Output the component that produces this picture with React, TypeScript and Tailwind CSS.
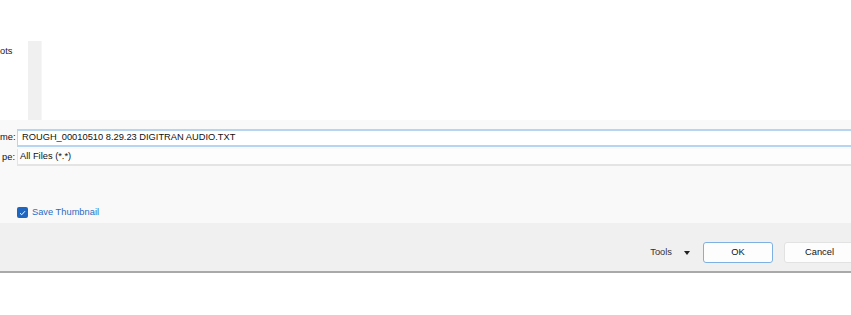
import React from 'react'

function App() {
  return (
    <div className="flex h-[315px] w-[851px] flex-col overflow-hidden bg-white font-['Liberation_Sans',Arial,sans-serif] text-[9.3px] text-[#111]">
      {/* FOLDER LIST */}
      <div className="flex h-[120px] bg-white">
        <div className="w-[28px] pt-[44px] leading-[14px] text-[#222]">ots</div>
        <div className="mt-[41px] h-[79px] w-[14px] border-r border-[#f6f6f6] bg-[#f0f0f0]" />
      </div>

      {/* FIELDS */}
      <div className="flex h-[103px] flex-col bg-[#f9f9f9] pt-[9px]">
        <div className="flex items-center">
          <span className="w-[17px] whitespace-nowrap pr-[2px] text-right">me:</span>
          <div className="flex h-[18px] flex-1 items-center border-y-2 border-l border-[#b8d5f0] bg-white pl-[4px]">
            ROUGH_00010510 8.29.23 DIGITRAN AUDIO.TXT
          </div>
        </div>
        <div className="mt-[2px] flex items-center">
          <span className="w-[17px] whitespace-nowrap pr-[2px] text-right">pe:</span>
          <div className="flex h-[17px] flex-1 items-center border-b-2 border-l border-[#e4e4e4] bg-[#fdfdfd] pl-[2px]">
            All Files (*.*)
          </div>
        </div>
        <label className="mt-[40px] flex items-center gap-[4px] pl-[17px]">
          <span className="flex h-[11px] w-[11px] items-center justify-center rounded-[2px] bg-[#1f66c1]">
            <svg width="7" height="6" viewBox="0 0 7 6" fill="none">
              <path d="M1 3.2 L2.7 4.8 L6 1.2" stroke="white" strokeWidth="1" />
            </svg>
          </span>
          <span className="text-[#2b6bc4]">Save Thumbnail</span>
        </label>
      </div>

      {/* BUTTON BAR */}
      <div className="flex h-[50px] items-start justify-end gap-[12px] border-b-2 border-[#a9a9a9] bg-[#f0f0f0] pt-[19px]">
        <div className="mr-[1px] flex h-[21px] items-center gap-[12px] text-[#333]">
          <span>Tools</span>
          <svg width="6" height="4" viewBox="0 0 6 4">
            <path d="M0 0 H6 L3 4 Z" fill="#222" />
          </svg>
        </div>
        <button className="h-[21px] w-[70px] rounded-[3px] border border-[#7fb0e2] bg-[#fdfdfd] text-[#111]">
          OK
        </button>
        <button className="-mr-[4px] ml-[-1px] h-[21px] w-[71px] rounded-[3px] border border-[#e2e2e2] bg-[#fdfdfd] text-[#111]">
          Cancel
        </button>
      </div>
      <div className="flex-1 bg-white" />
    </div>
  )
}

export default App
